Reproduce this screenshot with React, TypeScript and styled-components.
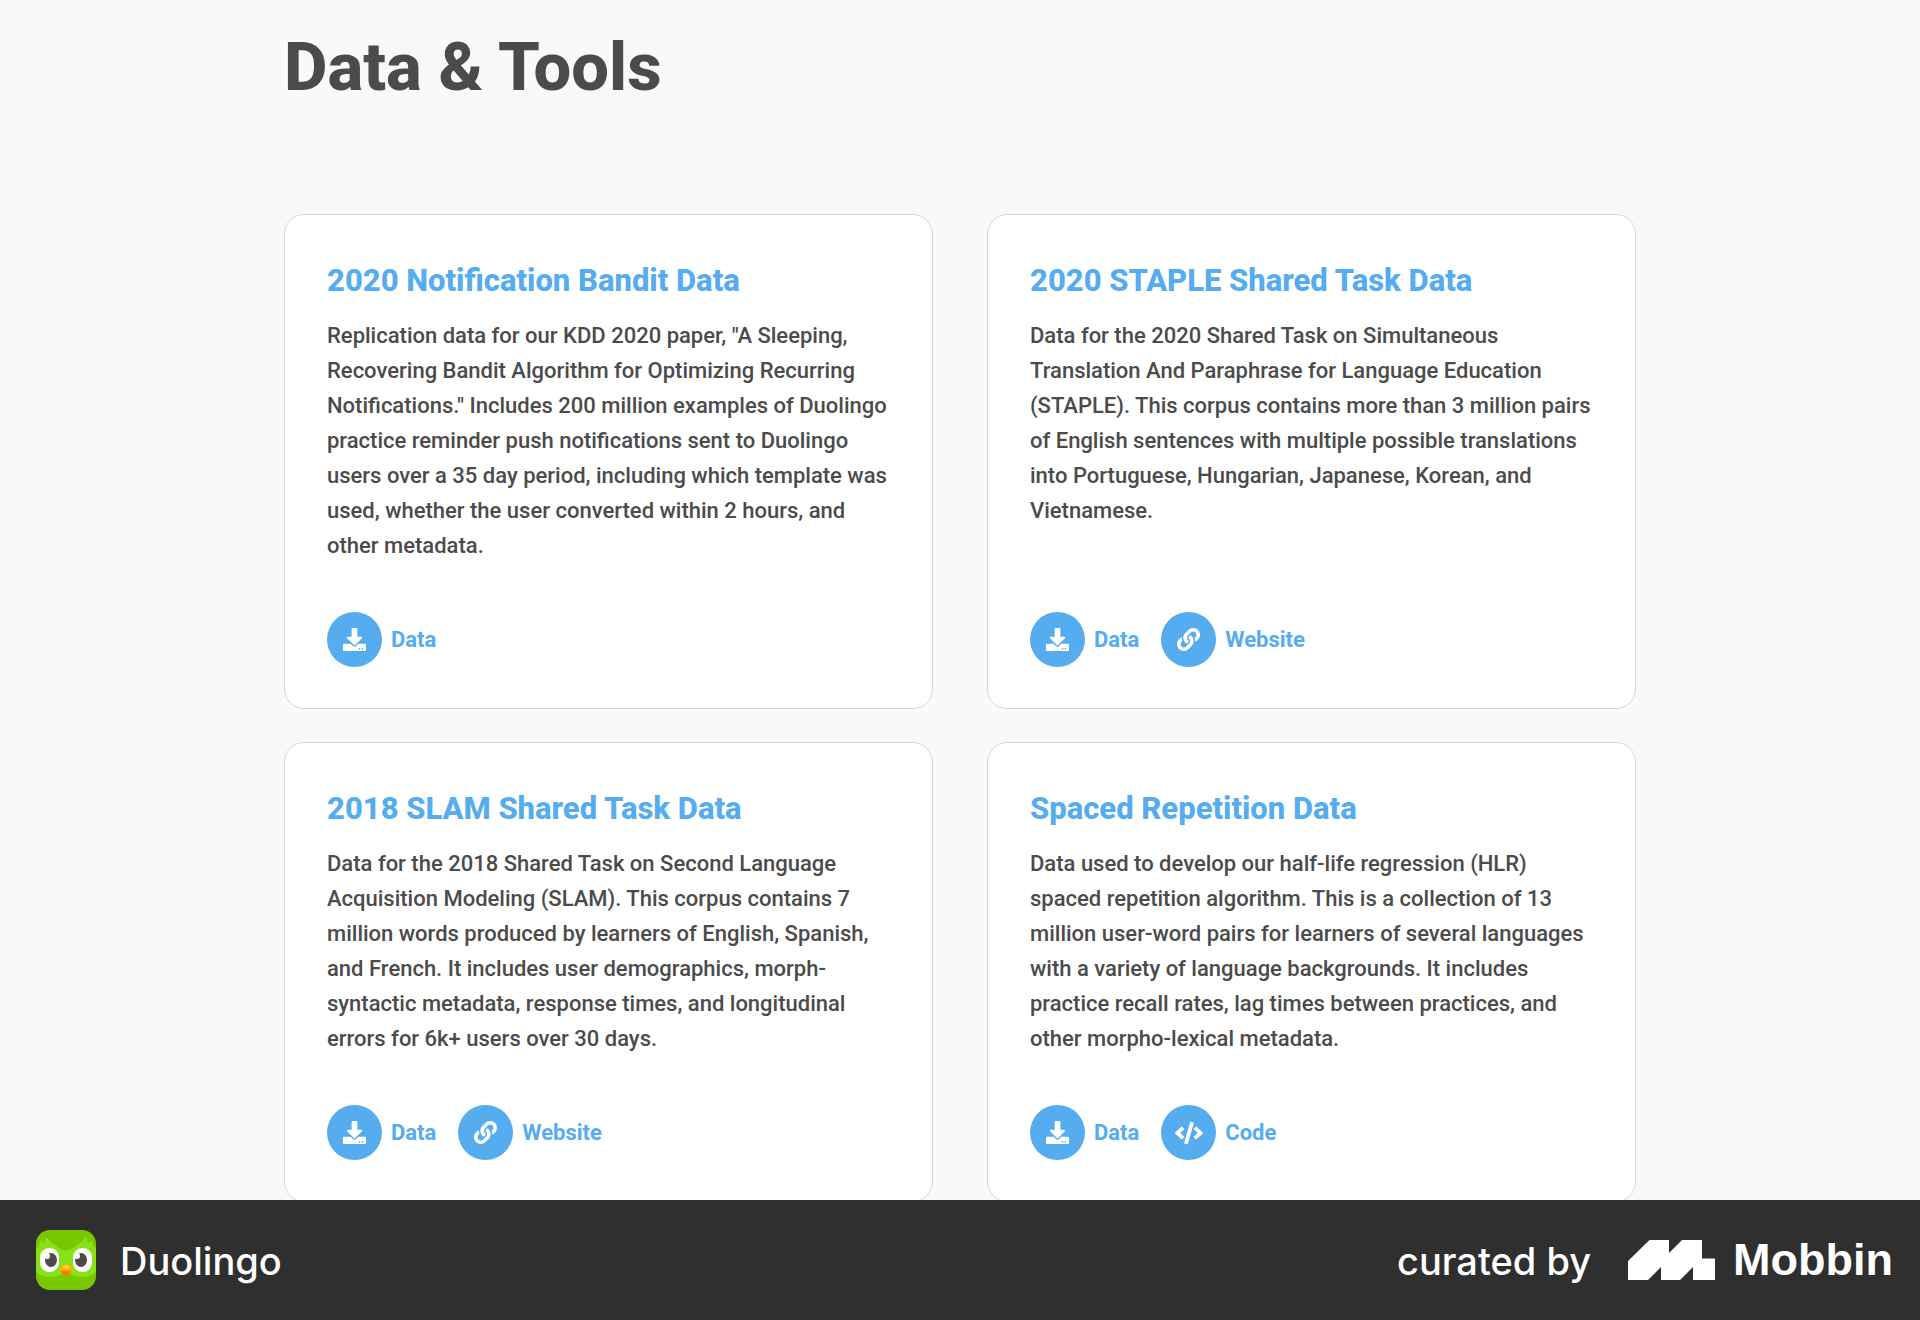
import React from "react";
import styled, { createGlobalStyle } from "styled-components";
import { FaCode, FaDownload, FaLink } from "react-icons/fa";

const GlobalStyle = createGlobalStyle`
  * { box-sizing: border-box; }
  body {
    margin: 0;
    background: #f9f9f9;
    color: #4b4b4b;
    font-family: Roboto, "Liberation Sans", sans-serif;
  }
  h1, h2, p, ul { margin: 0; padding: 0; }
`;

const Page = styled.div`
  display: flex;
  flex-direction: column;
  height: 100vh;
`;

const Content = styled.main`
  flex: 1;
  min-height: 0;
  overflow: hidden;
  padding: 27px 40px 0;
`;

const Container = styled.div`
  max-width: 1352px;
  margin: 0 auto;
`;

const PageTitle = styled.h1`
  font-size: 67px;
  line-height: 80px;
  font-weight: 800;
`;

const Grid = styled.section`
  display: grid;
  grid-template-columns: repeat(auto-fit, minmax(520px, 1fr));
  gap: 33px 54px;
  padding-top: 107px;
`;

const Card = styled.article`
  display: flex;
  flex-direction: column;
  padding: 46px 42px 41px;
  background: #fff;
  border: 1px solid #d6d6d6;
  border-radius: 20px;
`;

const CardTitle = styled.h2`
  color: #55acee;
  font-size: 31px;
  line-height: 40px;
  font-weight: 800;
`;

const CardText = styled.p`
  padding-top: 17px;
  font-size: 22px;
  line-height: 35px;
  font-weight: 500;
  white-space: pre-line;
`;

const Links = styled.ul`
  display: flex;
  flex-wrap: wrap;
  gap: 22px;
  margin-top: auto;
  padding-top: 49px;
  list-style: none;
`;

const ResourceLink = styled.a`
  display: flex;
  align-items: center;
  gap: 9px;
  color: #55acee;
  font-size: 22px;
  font-weight: 700;
  text-decoration: none;
`;

const Round = styled.span`
  display: grid;
  place-items: center;
  width: 55px;
  height: 55px;
  border-radius: 50%;
  background: #55acee;
  color: #fff;
`;

const Footer = styled.footer`
  display: flex;
  flex: none;
  align-items: center;
  justify-content: space-between;
  height: 120px;
  padding: 0 27px 0 36px;
  background: #2f2f2f;
  color: #fff;
`;

const AppBadge = styled.div`
  display: flex;
  align-items: center;
  gap: 24px;
`;

const Credit = styled.div`
  display: flex;
  align-items: center;
  gap: 37px;
`;

const FooterText = styled.span`
  padding-top: 2px;
  font-family: Inter, "Liberation Sans", sans-serif;
  font-size: 38px;
  line-height: 48px;
  font-weight: 500;
`;

const Brand = styled.span`
  display: flex;
  align-items: center;
  gap: 18px;
  font-family: "Liberation Sans", Arial, sans-serif;
  font-size: 45px;
  line-height: 48px;
  font-weight: 700;
`;

type Kind = "Data" | "Website" | "Code";

const icons: Record<Kind, React.ReactNode> = {
  Data: <FaDownload size={23} />,
  Website: <FaLink size={23} />,
  Code: <FaCode size={28} />,
};

const resources: { title: string; text: string; links: Kind[] }[] = [
  {
    title: "2020 Notification Bandit Data",
    text: `Replication data for our KDD 2020 paper, "A Sleeping,
Recovering Bandit Algorithm for Optimizing Recurring
Notifications." Includes 200 million examples of Duolingo
practice reminder push notifications sent to Duolingo
users over a 35 day period, including which template was
used, whether the user converted within 2 hours, and
other metadata.`,
    links: ["Data"],
  },
  {
    title: "2020 STAPLE Shared Task Data",
    text: `Data for the 2020 Shared Task on Simultaneous
Translation And Paraphrase for Language Education
(STAPLE). This corpus contains more than 3 million pairs
of English sentences with multiple possible translations
into Portuguese, Hungarian, Japanese, Korean, and
Vietnamese.`,
    links: ["Data", "Website"],
  },
  {
    title: "2018 SLAM Shared Task Data",
    text: `Data for the 2018 Shared Task on Second Language
Acquisition Modeling (SLAM). This corpus contains 7
million words produced by learners of English, Spanish,
and French. It includes user demographics, morph-
syntactic metadata, response times, and longitudinal
errors for 6k+ users over 30 days.`,
    links: ["Data", "Website"],
  },
  {
    title: "Spaced Repetition Data",
    text: `Data used to develop our half-life regression (HLR)
spaced repetition algorithm. This is a collection of 13
million user-word pairs for learners of several languages
with a variety of language backgrounds. It includes
practice recall rates, lag times between practices, and
other morpho-lexical metadata.`,
    links: ["Data", "Code"],
  },
];

const OwlIcon = () => (
  <svg width="60" height="60" viewBox="0 0 60 60" aria-hidden="true">
    <rect width="60" height="60" rx="14" fill="#78c800" />
    <path
      d="M0 18L3 17L4 11L8 13L10 7C14 12 19 15 23 18C27 21 33 21 37 18C41 15 46 12 50 7L52 13L56 11L57 17L60 18V41C57 45 52 47 46 47C38 47 34 43 30 43S22 47 14 47C8 47 3 45 0 41Z"
      fill="#89e219"
    />
    <rect x="4" y="18" width="19" height="24" rx="9" fill="#fff" />
    <rect x="37" y="18" width="19" height="24" rx="9" fill="#fff" />
    <ellipse cx="15" cy="30" rx="6" ry="7" fill="#4b4b4b" />
    <ellipse cx="45" cy="30" rx="6" ry="7" fill="#4b4b4b" />
    <circle cx="11" cy="26" r="3" fill="#fff" />
    <circle cx="41" cy="26" r="3" fill="#fff" />
    <path d="M25 39H35C35 43 33 46 30 46S25 43 25 39Z" fill="#ff7a00" />
    <path d="M23 39C24 37 27 34 30 34S36 37 37 39C36 41 33 41 30 41S24 41 23 39Z" fill="#ffb100" />
    <ellipse cx="30" cy="37" rx="3" ry="2" fill="#ffd23c" />
  </svg>
);

const MobbinMark = () => (
  <svg width="87" height="40" viewBox="0 0 87 40" aria-hidden="true">
    <path
      d="M0 21L21.5 0H41V13L54 0H74V18.5H87V40H65V27L52 40H33V27L20 40H0Z"
      fill="#fff"
    />
  </svg>
);

export default function App() {
  return (
    <Page>
      <GlobalStyle />
      <Content>
        <Container>
          <PageTitle>Data &amp; Tools</PageTitle>
          <Grid>
            {resources.map((item) => (
              <Card key={item.title}>
                <CardTitle>{item.title}</CardTitle>
                <CardText>{item.text}</CardText>
                <Links>
                  {item.links.map((kind) => (
                    <li key={kind}>
                      <ResourceLink href="#">
                        <Round>{icons[kind]}</Round>
                        {kind}
                      </ResourceLink>
                    </li>
                  ))}
                </Links>
              </Card>
            ))}
          </Grid>
        </Container>
      </Content>
      <Footer>
        <AppBadge>
          <OwlIcon />
          <FooterText>Duolingo</FooterText>
        </AppBadge>
        <Credit>
          <FooterText>curated by</FooterText>
          <Brand>
            <MobbinMark />
            Mobbin
          </Brand>
        </Credit>
      </Footer>
    </Page>
  );
}
